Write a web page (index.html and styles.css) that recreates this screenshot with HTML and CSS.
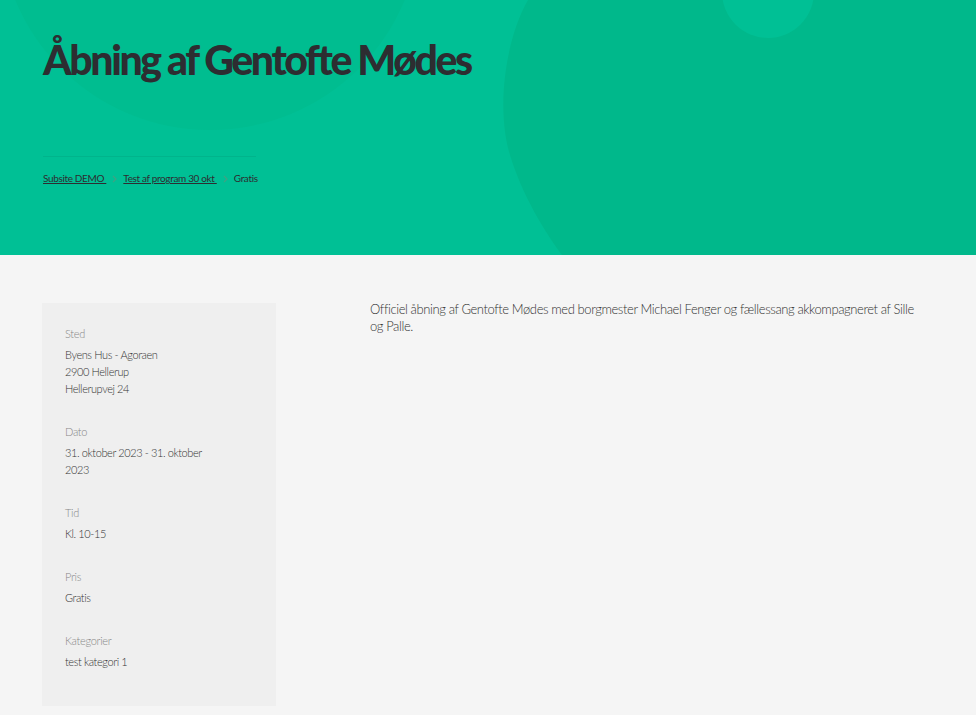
FILE: index.html
```html
<!DOCTYPE html>
<html lang="da">
<head>
<meta charset="utf-8">
<title>Åbning af Gentofte Mødes</title>
<link rel="stylesheet" href="styles.css">
</head>
<body>
<header class="hero">
  <svg class="hero-shapes" width="976" height="255" viewBox="0 0 976 255" aria-hidden="true">
    <circle cx="210" cy="-81" r="211" fill="#00bd90"/>
    <path d="M528 0 C505 40 496 110 510 155 C522 195 545 232 562 255 L976 255 L976 0 Z" fill="#00b88b"/>
    <circle cx="768" cy="-8" r="46" fill="#00c095"/>
  </svg>
  <div class="hero-inner">
    <h1 class="hero-title">Åbning af Gentofte Mødes</h1>
    <nav class="crumbs">
      <a href="#" class="crumb-link">Subsite DEMO </a>
      <svg class="crumb-sep" width="5" height="8" viewBox="0 0 5 8" aria-hidden="true"><path d="M1 1 L4 4 L1 7" fill="none" stroke="#3fa283" stroke-width="1.2"/></svg>
      <a href="#" class="crumb-link">Test af program 30 okt </a>
      <svg class="crumb-sep" width="5" height="8" viewBox="0 0 5 8" aria-hidden="true"><path d="M1 1 L4 4 L1 7" fill="none" stroke="#3fa283" stroke-width="1.2"/></svg>
      <span class="crumb-current">Gratis</span>
    </nav>
  </div>
</header>
<main class="page">
  <aside class="facts">
    <div class="fact">
      <div class="fact-label">Sted</div>
      <div class="fact-value">Byens Hus - Agoraen<br>2900 Hellerup<br>Hellerupvej 24</div>
    </div>
    <div class="fact">
      <div class="fact-label">Dato</div>
      <div class="fact-value">31. oktober 2023 - 31. oktober<br>2023</div>
    </div>
    <div class="fact">
      <div class="fact-label">Tid</div>
      <div class="fact-value">Kl. 10-15</div>
    </div>
    <div class="fact">
      <div class="fact-label">Pris</div>
      <div class="fact-value">Gratis</div>
    </div>
    <div class="fact">
      <div class="fact-label">Kategorier</div>
      <div class="fact-value">test kategori 1</div>
    </div>
  </aside>
  <section class="content">
    <p class="lead">Officiel åbning af Gentofte Mødes med borgmester Michael Fenger og fællessang akkompagneret af Sille og Palle.</p>
  </section>
</main>
</body>
</html>
```
FILE: styles.css
```css
* { box-sizing: border-box; }
html, body { margin: 0; padding: 0; }
body {
  background: #f5f5f5;
  color: #333;
  font-family: Lato, "Open Sans", "Liberation Sans", sans-serif;
  font-weight: 300;
}
.hero {
  position: relative;
  height: 255px;
  background: #00c095;
  overflow: hidden;
}
.hero-shapes {
  position: absolute;
  left: 0;
  top: 0;
}
.hero-inner {
  position: relative;
  padding: 30px 43px 0;
}
.hero-title {
  margin: 0;
  font-family: Lato, "Open Sans", sans-serif;
  font-weight: 900;
  font-size: 41px;
  line-height: 60px;
  color: #2d2d31;
  letter-spacing: -2.4px;
}
.crumbs {
  margin-top: 66px;
  width: 213px;
  border-top: 1px solid rgba(0, 0, 0, 0.06);
  padding-top: 14px;
  font-size: 10px;
  line-height: 14px;
  letter-spacing: -0.35px;
  display: flex;
  align-items: center;
  gap: 6px;
  white-space: nowrap;
  color: #2d2d31;
  font-weight: 400;
}
.crumb-link {
  color: #2d2d31;
  text-decoration: underline;
  white-space: pre;
}
.crumb-sep { flex: none; margin-top: 1px; }
.page {
  display: grid;
  grid-template-columns: 234px 1fr;
  column-gap: 94px;
  padding: 48px 50px 0 42px;
  align-items: start;
}
.facts {
  background: #efefef;
  padding: 23px 23px 36px;
  display: flex;
  flex-direction: column;
  gap: 27px;
}
.fact-label {
  font-size: 11px;
  line-height: 16px;
  color: #888;
  letter-spacing: -0.3px;
}
.fact-value {
  margin-top: 4px;
  font-size: 11px;
  line-height: 17px;
  color: #333;
  letter-spacing: -0.4px;
}
.lead {
  margin: -2px 0 0;
  font-size: 13px;
  line-height: 17px;
  color: #333;
  letter-spacing: -0.4px;
}
```
